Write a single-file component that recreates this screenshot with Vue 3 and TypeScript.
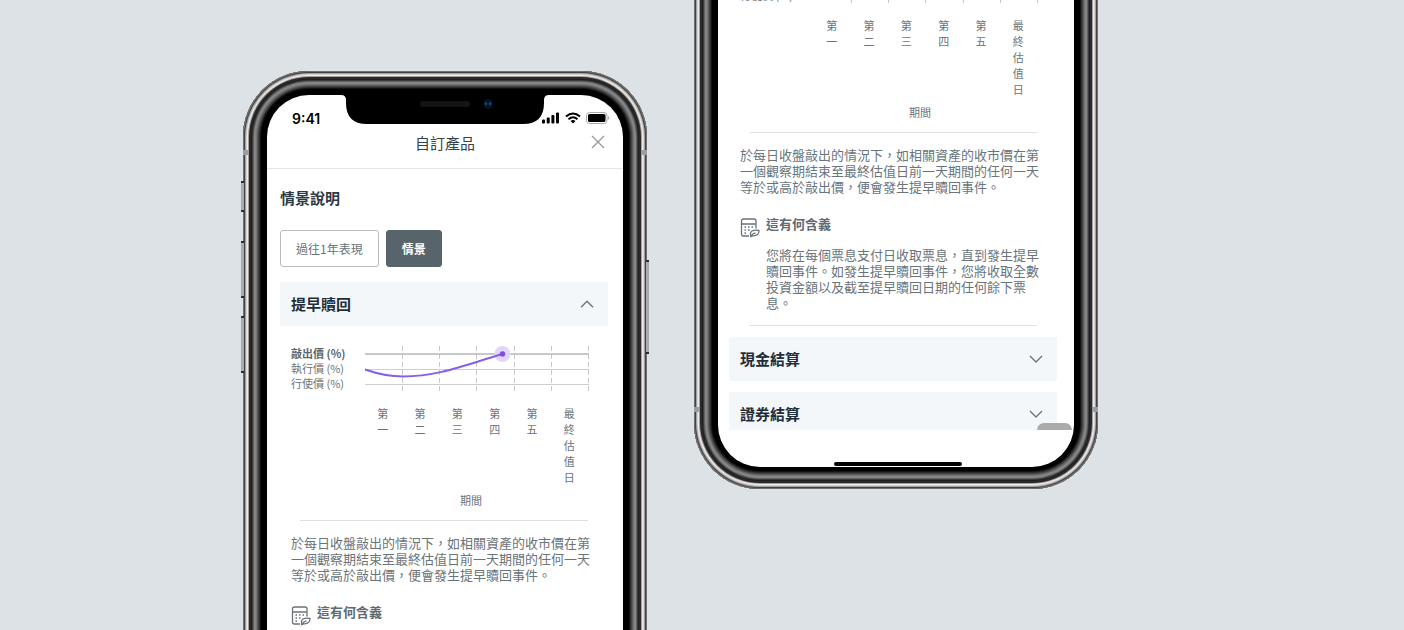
<script setup lang="ts">
interface Phone {
  id: 'first' | 'second'
  opening: boolean
}

const phones: Phone[] = [
  { id: 'first', opening: true },
  { id: 'second', opening: false },
]

const levels = ['敲出價', '執行價', '行使價']
const periods = ['第一', '第二', '第三', '第四', '第五', '最終估值日']
const gridLines = [37, 74, 111, 149, 186, 223]
</script>

<template>
  <main class="stage" lang="zh-Hant">
    <article v-for="phone in phones" :key="phone.id" class="phone" :class="phone.id">
      <span class="band band-left"></span>
      <span class="band band-right"></span>
      <template v-if="phone.opening">
        <span class="key key-mute"></span>
        <span class="key key-up"></span>
        <span class="key key-down"></span>
        <span class="key key-power"></span>
      </template>

      <div class="screen">
        <template v-if="phone.opening">
          <svg class="notch" viewBox="0 0 208 29" aria-hidden="true">
            <path d="M0 0H208Q203 0 203 5V8Q203 29 182 29H26Q5 29 5 8V5Q5 0 0 0Z" fill="#000" />
            <rect x="79" y="6" width="50" height="6" rx="3" fill="#141414" />
            <circle cx="147" cy="9" r="5" fill="#071524" />
            <path d="M145 8v1.400M149 8v1.400" stroke="#1f5a9c" stroke-width="1.600" stroke-linecap="round" />
          </svg>
          <div class="status">
            <span class="clock">9:41</span>
            <span class="signals">
              <svg width="18" height="12" viewBox="0 0 18 12" aria-hidden="true">
                <rect x="0" y="7.500" width="3" height="4" rx="1" />
                <rect x="4.700" y="5.500" width="3" height="6" rx="1" />
                <rect x="9.400" y="3" width="3" height="8.500" rx="1" />
                <rect x="14" y="0.500" width="3" height="11" rx="1" />
              </svg>
              <svg width="16" height="12" viewBox="0 0 16 12" aria-hidden="true">
                <path d="M1 4.600Q8-1.600 15 4.600M3.500 7.200Q8 3.200 12.500 7.200" fill="none" stroke="#000" stroke-width="2" />
                <path d="M5.500 9Q8 7 10.500 9L8 11.500Z" />
              </svg>
              <svg width="24" height="12" viewBox="0 0 24 12" aria-hidden="true">
                <rect x="0.500" y="0.500" width="20.500" height="11" rx="3" fill="none" stroke="#aaa" />
                <rect x="2" y="2" width="17.500" height="8" rx="1.600" />
                <path d="M22.300 4v4q1-.7 1-2t-1-2Z" fill="#999" />
              </svg>
            </span>
          </div>
          <header class="bar">
            <h1>自訂產品</h1>
            <button class="close" type="button" aria-label="關閉">
              <svg width="14" height="14" viewBox="0 0 14 14" aria-hidden="true">
                <path d="M1 1l12 12M13 1L1 13" stroke="#939ba1" stroke-width="1.300" fill="none" />
              </svg>
            </button>
          </header>
        </template>

        <div class="content">
          <template v-if="phone.opening">
            <h2>情景說明</h2>
            <div class="tabs">
              <button type="button" class="tab">過往1年表現</button>
              <button type="button" class="tab active">情景</button>
            </div>
            <button type="button" class="fold fold-open" aria-expanded="true">
              <span>提早贖回</span>
              <svg width="14" height="8" viewBox="0 0 14 8" aria-hidden="true">
                <path d="M1 7.200L7 1.200L13 7.200" />
              </svg>
            </button>
          </template>

          <section class="panel">
            <div class="chart">
              <ul class="levels">
                <li v-for="level in levels" :key="level">{{ level }} (%)</li>
              </ul>
              <svg class="plot" viewBox="0 0 224 45" preserveAspectRatio="none" aria-hidden="true">
                <path
                  v-for="x in gridLines"
                  :key="x"
                  :d="`M${x}.500 0V45`"
                  stroke="#c3c8cc"
                  stroke-dasharray="5 3"
                />
                <path d="M0 8H224" stroke="#b3b7ba" stroke-width="1.600" />
                <path d="M0 23.500H224M0 38.500H224" stroke="#cccfd2" stroke-width="1.200" />
                <circle cx="137.500" cy="8" r="8" fill="#e3d6fb" />
                <path d="M0 23.500C13 28 25 30.500 38 30.500C73 30.500 100 19 137.500 8" fill="none" stroke="#855ee9" stroke-width="1.900" />
                <circle cx="137.500" cy="8" r="2.700" fill="#7c4deb" />
              </svg>
            </div>
            <div class="axis">
              <ol class="periods">
                <li v-for="period in periods" :key="period"><span>{{ period }}</span></li>
              </ol>
              <p class="axis-name">期間</p>
            </div>
            <hr />
            <p class="copy">
              於每日收盤敲出的情況下，如相關資產的收市價在第一個觀察期結束至最終估值日前一天期間的任何一天等於或高於敲出價，便會發生提早贖回事件。
            </p>
            <div class="meaning">
              <svg class="calc" width="20" height="20" viewBox="0 0 20 20" aria-hidden="true">
                <path d="M9 18H3.500Q1.500 18 1.500 16V3Q1.500 1 3.500 1H14Q16 1 16 3V10.500M1.500 6H16" />
                <path d="M4.500 9h1.500M8 9h1.500M11.500 9h1.500M4.500 12h1.500M8 12h1.500M4.500 15h1.500" />
                <path d="M10 18.800Q11.500 18.800 13 17.800Q19 18 19 12.500Q15 11.500 12 13Q9.500 14.800 11 18.200M11 18Q12.500 15.500 15.500 14.800" />
              </svg>
              <div>
                <h3>這有何含義</h3>
                <p v-if="!phone.opening" class="copy answer">
                  您將在每個票息支付日收取票息，直到發生提早贖回事件。如發生提早贖回事件，您將收取全數投資金額以及截至提早贖回日期的任何餘下票息。
                </p>
              </div>
            </div>
            <hr v-if="!phone.opening" class="last-rule" />
          </section>

          <template v-if="!phone.opening">
            <button type="button" class="fold" aria-expanded="false">
              <span>現金結算</span>
              <svg width="14" height="8" viewBox="0 0 14 8" aria-hidden="true">
                <path d="M1 1L7 7L13 1" />
              </svg>
            </button>
            <div class="cut">
              <button type="button" class="fold" aria-expanded="false">
                <span>證券結算</span>
                <svg width="14" height="8" viewBox="0 0 14 8" aria-hidden="true">
                  <path d="M1 1L7 7L13 1" />
                </svg>
              </button>
            </div>
          </template>
        </div>
        <div v-if="!phone.opening" class="foot">
          <span class="float"></span>
          <span class="home"></span>
        </div>
      </div>
    </article>
  </main>
</template>

<style>
body {
  margin: 0;
  background: #dce2e6;
}
</style>

<style scoped>
* {
  box-sizing: border-box;
}

.stage {
  display: flex;
  justify-content: center;
  align-items: flex-start;
  gap: 47px;
  height: 100vh;
  padding-right: 63px;
  overflow: hidden;
  background: #dce2e6;
  color: #6a747b;
  font-family: "Noto Sans CJK TC", "Noto Sans", sans-serif;
}

h1,
h2,
h3,
p,
ul,
ol {
  margin: 0;
  padding: 0;
  list-style: none;
}

button {
  margin: 0;
  font-family: inherit;
  cursor: pointer;
}

.phone {
  position: relative;
  display: flex;
  flex: 0 1 404px;
  padding: 24px;
  border-radius: 66px;
  background: #000;
  box-shadow:
    inset 0 0 0 1px #6f7071,
    inset 0 0 0 2px #424242,
    inset 0 0 0 3px #a2a2a2,
    inset 0 0 0 4px #d6d3d2,
    inset 0 0 0 5px #efebe9,
    inset 0 0 0 6px #a39f9d,
    inset 0 0 0 8px #2b2929,
    inset 0 0 0 9px #1f1f1f,
    inset 0 0 0 10px #3c3c3c,
    inset 0 0 0 11px #626262,
    inset 0 0 0 13px #858585,
    inset 0 0 0 14px #747474,
    inset 0 0 0 15px #5c5c5c,
    inset 0 0 0 16px #444,
    inset 0 0 0 17px #2c2c2c,
    inset 0 0 0 18px #131313;
}

.first {
  min-height: 800px;
  margin-top: 71px;
}

.second {
  height: 800px;
  margin-top: -311px;
  padding-bottom: 22px;
}

.band {
  position: absolute;
  width: 6px;
  height: 5px;
  background: #9b9d9f;
}

.band-left {
  left: 0;
}

.band-right {
  right: 0;
}

.first .band {
  top: 79px;
}

.second .band {
  bottom: 77px;
}

.key {
  position: absolute;
  left: -2px;
  width: 3px;
  border: solid #2b2b2b;
  border-width: 2px 0;
  background: #a9acae;
}

.key-mute {
  top: 110px;
  height: 31px;
}

.key-up {
  top: 170px;
  height: 57px;
}

.key-down {
  top: 245px;
  height: 57px;
}

.key-power {
  top: 189px;
  right: -2px;
  left: auto;
  height: 94px;
}

.screen {
  position: relative;
  display: flex;
  flex: 1;
  flex-direction: column;
  min-width: 0;
  border-radius: 42px;
  background: #fff;
  overflow: hidden;
}

.second .screen {
  justify-content: flex-end;
}

.notch {
  position: absolute;
  top: 0;
  left: 50%;
  width: 208px;
  height: 29px;
  margin-left: -104px;
}

.status {
  display: flex;
  justify-content: space-between;
  height: 32px;
  padding: 15px 13px 0 25px;
}

.clock {
  color: #000;
  font: 600 14px/17px Inter, sans-serif;
}

.signals {
  display: flex;
  gap: 5px;
  padding-top: 2px;
}

.bar {
  display: flex;
  position: relative;
  align-items: center;
  justify-content: center;
  height: 42px;
  padding-bottom: 10px;
  border-bottom: 1px solid #e3e5e7;
}

.bar h1 {
  color: #34424c;
  font-size: 15px;
  font-weight: 400;
  line-height: 22px;
}

.close {
  display: flex;
  position: absolute;
  top: 8px;
  right: 18px;
  padding: 0;
  border: 0;
  background: none;
}

.content {
  padding: 18px 15px 0 13px;
}

.second .content {
  padding: 0 17px 0 11px;
}

h2 {
  color: #2b3a45;
  font-size: 15px;
  font-weight: 700;
  line-height: 22px;
}

.tabs {
  display: flex;
  gap: 7px;
  margin-top: 21px;
}

.tab {
  height: 37px;
  padding: 0 15px;
  border: 1px solid #b7bcc0;
  border-radius: 3px;
  background: #fff;
  color: #68737a;
  font-size: 12px;
  line-height: 18px;
}

.tab.active {
  border-color: #58646b;
  background: #58646b;
  color: #fff;
  font-weight: 700;
}

.fold {
  display: flex;
  align-items: center;
  justify-content: space-between;
  width: 100%;
  height: 44px;
  padding: 0 14px 0 11px;
  border: 0;
  border-radius: 2px;
  background: #f4f7f9;
  color: #1f2e39;
  font-size: 15px;
  font-weight: 700;
  line-height: 22px;
}

.fold-open {
  margin-top: 15px;
}

.fold path {
  fill: none;
  stroke: #6d757b;
  stroke-width: 1.4;
}

.panel {
  padding: 20px 17px 0 11px;
}

.chart {
  display: flex;
  padding-right: 2px;
}

.levels {
  flex: 0 0 74px;
  font-size: 11px;
  line-height: 15px;
  white-space: nowrap;
}

.levels li:first-child {
  color: #5a666e;
  font-weight: 700;
}

.plot {
  flex: 1;
  min-width: 0;
  height: 45px;
  overflow: visible;
}

.axis {
  padding: 14px 3px 0 73px;
  font-size: 11px;
  line-height: 16px;
}

.periods {
  display: grid;
  grid-template-columns: repeat(6, 1fr);
}

.periods li {
  display: flex;
  justify-content: center;
}

.periods span {
  width: 11px;
  word-break: break-all;
}

.axis-name {
  margin-top: 7px;
  padding-right: 10px;
  text-align: center;
}

hr {
  height: 1px;
  margin: 12px 3px 14px 9px;
  border: 0;
  background: #dfe1e3;
}

.copy {
  font-size: 13px;
  line-height: 16px;
}

.meaning {
  display: flex;
  gap: 6px;
  margin-top: 19px;
}

.calc {
  flex: none;
  margin-top: 4px;
  fill: none;
  stroke: #68737a;
  stroke-width: 1.3;
}

h3 {
  color: #5f6a72;
  font-size: 13px;
  font-weight: 700;
  line-height: 20px;
}

.answer {
  margin-top: 13px;
}

.last-rule {
  margin-top: 14px;
  margin-bottom: 11px;
}

.cut {
  height: 38px;
  margin-top: 11px;
  overflow: hidden;
}

.foot {
  position: relative;
  display: flex;
  align-items: flex-end;
  justify-content: center;
  height: 37px;
  padding-left: 4px;
}

.float {
  position: absolute;
  top: -7px;
  right: 2px;
  width: 35px;
  height: 7px;
  border-radius: 7px 7px 0 0;
  background: #ababab;
}

.home {
  width: 128px;
  height: 4px;
  margin-bottom: 1px;
  border-radius: 2px;
  background: #000;
}
</style>
